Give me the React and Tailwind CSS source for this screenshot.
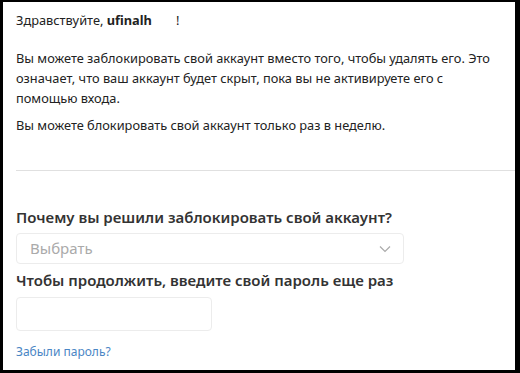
export default function App() {
  return (
    <div className="w-[520px] h-[373px] bg-black pt-[2px] pl-[3px] pr-[5px] pb-[3px] font-['Noto_Sans',sans-serif]">
      <div className="h-full bg-white flex flex-col text-[#222]">
        {/* Приветствие и описание */}
        <div className="pl-[13px] pt-[9px]">
          <p className="text-[12.8px] leading-[18px]">
            Здравствуйте, <b className="font-bold">ufinalh</b>
            <span className="ml-[24px]">!</span>
          </p>
          <p className="mt-[19px] text-[12.8px] leading-[20px]">
            Вы можете заблокировать свой аккаунт вместо того, чтобы удалять его. Это
            <br />
            означает, что ваш аккаунт будет скрыт, пока вы не активируете его с
            <br />
            помощью входа.
          </p>
          <p className="mt-[7px] text-[12.8px] leading-[20px]">
            Вы можете блокировать свой аккаунт только раз в неделю.
          </p>
        </div>

        <div className="ml-[13px] mt-[35px] border-t border-[#e0e0e0]" />

        {/* Форма */}
        <div className="pl-[13px] pt-[36px]">
          <h2 className="text-[15px] leading-[20px] font-semibold text-[#333]">
            Почему вы решили заблокировать свой аккаунт?
          </h2>
          <div className="mt-[6px] w-[388px] h-[31px] rounded-[4px] border border-[#ececec] flex items-center justify-between pl-[13px] pr-[12px]">
            <span className="text-[15px] text-[#aaa]">Выбрать</span>
            <svg width="12" height="8" viewBox="0 0 12 8" fill="none" stroke="#aaa" strokeWidth="1.2">
              <path d="M1 1.5l5 5 5-5" />
            </svg>
          </div>
          <h2 className="mt-[6px] text-[15px] leading-[20px] font-semibold text-[#333]">
            Чтобы продолжить, введите свой пароль еще раз
          </h2>
          <div className="mt-[7px] w-[196px] h-[34px] rounded-[4px] border border-[#ececec]" />
          <a className="block mt-[12px] text-[12px] text-[#4a86c5]">Забыли пароль?</a>
        </div>
      </div>
    </div>
  );
}
